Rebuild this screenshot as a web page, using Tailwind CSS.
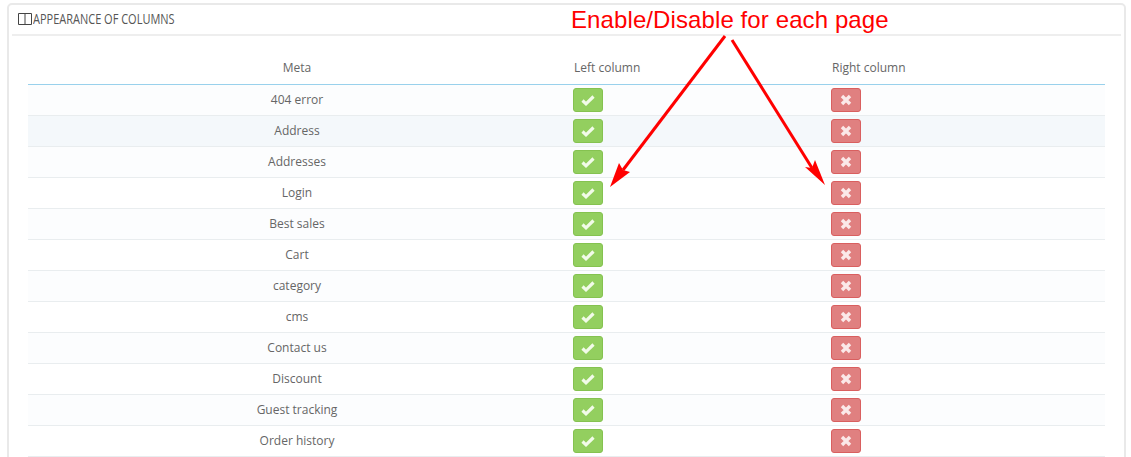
<!DOCTYPE html>
<html lang="en">
  <head>
    <meta charset="UTF-8" />
    <title>Appearance of columns</title>
    <script src="https://cdn.jsdelivr.net/npm/@tailwindcss/browser@4"></script>
  </head>
  <body class="relative h-[457px] overflow-hidden bg-white font-['Open_Sans',sans-serif] text-[12px] text-[#666]">
    <!-- Panel -->
    <section class="ml-[7px] mr-[5px] mt-[3px] h-[480px] rounded-[5px] border-2 border-[#e9e9e9] px-[3px]">
      <header class="flex h-[31px] items-center gap-[1px] border-b-2 border-[#eee] pb-[2px] pl-[6px] text-[#555]">
        <svg width="14" height="12" viewBox="0 0 14 12" fill="none" stroke="#444" stroke-width="1">
          <path d="M.5 .5h13v11H.5zM7 .5v11" />
        </svg>
        <h3 class="origin-left scale-x-[0.785] whitespace-nowrap text-[14px] leading-none">APPEARANCE OF COLUMNS</h3>
      </header>

      <!-- Table -->
      <div class="ml-[16px] mr-[16px] pt-[16px]">
        <div class="grid h-[33px] grid-cols-[538px_258px_1fr] items-center border-b border-[#99d1ec]">
          <div class="text-center">Meta</div>
          <div class="pl-[8px]">Left column</div>
          <div class="pl-[8px]">Right column</div>
        </div>
        <div id="rows"></div>
      </div>
    </section>

    <!-- Annotation -->
    <p class="absolute left-[571px] top-[4px] font-['Liberation_Sans',sans-serif] text-[24px] leading-[32px] tracking-[0.1px] text-[#f00]">Enable/Disable for each page</p>
    <svg class="absolute left-0 top-0" width="1131" height="457" fill="none">
      <path d="M725 36 623 170" stroke="#f00" stroke-width="3" />
      <path d="M732 40 812 168" stroke="#f00" stroke-width="3" />
      <path d="M610 187 619 163 623 170 630 172Z" fill="#f00" />
      <path d="M825 185 815 160 812 168 805 167Z" fill="#f00" />
    </svg>

    <script>
      const pages = ["404 error", "Address", "Addresses", "Login", "Best sales", "Cart", "category", "cms", "Contact us", "Discount", "Guest tracking", "Order history"];

      const okButton = `<span class="flex h-[24px] w-[30px] items-center justify-center rounded-[3px] border border-[#85c250] bg-[#93cf5f]">
        <svg width="14" height="12" viewBox="0 0 14 12" fill="none" stroke="#f2fbe9" stroke-width="3.2"><path d="M1.5 6.5 5 9.8 12.5 2.5" /></svg></span>`;
      const offButton = `<span class="flex h-[24px] w-[30px] items-center justify-center rounded-[3px] border border-[#d95f5f] bg-[#e08080]">
        <svg width="12" height="12" viewBox="0 0 12 12" fill="none" stroke="#fbe9e9" stroke-width="3.4"><path d="M2 2 10 10M10 2 2 10" /></svg></span>`;

      // second row sits under the mouse in the screenshot, so it has the hover tint
      const rowBg = (i) => (i === 1 ? "bg-[#f4f8fb]" : i % 2 ? "bg-white" : "bg-[#fcfdfe]");

      document.getElementById("rows").innerHTML = pages
        .map((name, i) => `<div class="grid h-[31px] grid-cols-[538px_258px_1fr] items-center border-b border-[#e9edef] ${rowBg(i)}">
          <div class="text-center">${name}</div>
          <div class="pl-[7px]">${okButton}</div>
          <div class="pl-[7px]">${offButton}</div>
        </div>`)
        .join("");
    </script>
  </body>
</html>
